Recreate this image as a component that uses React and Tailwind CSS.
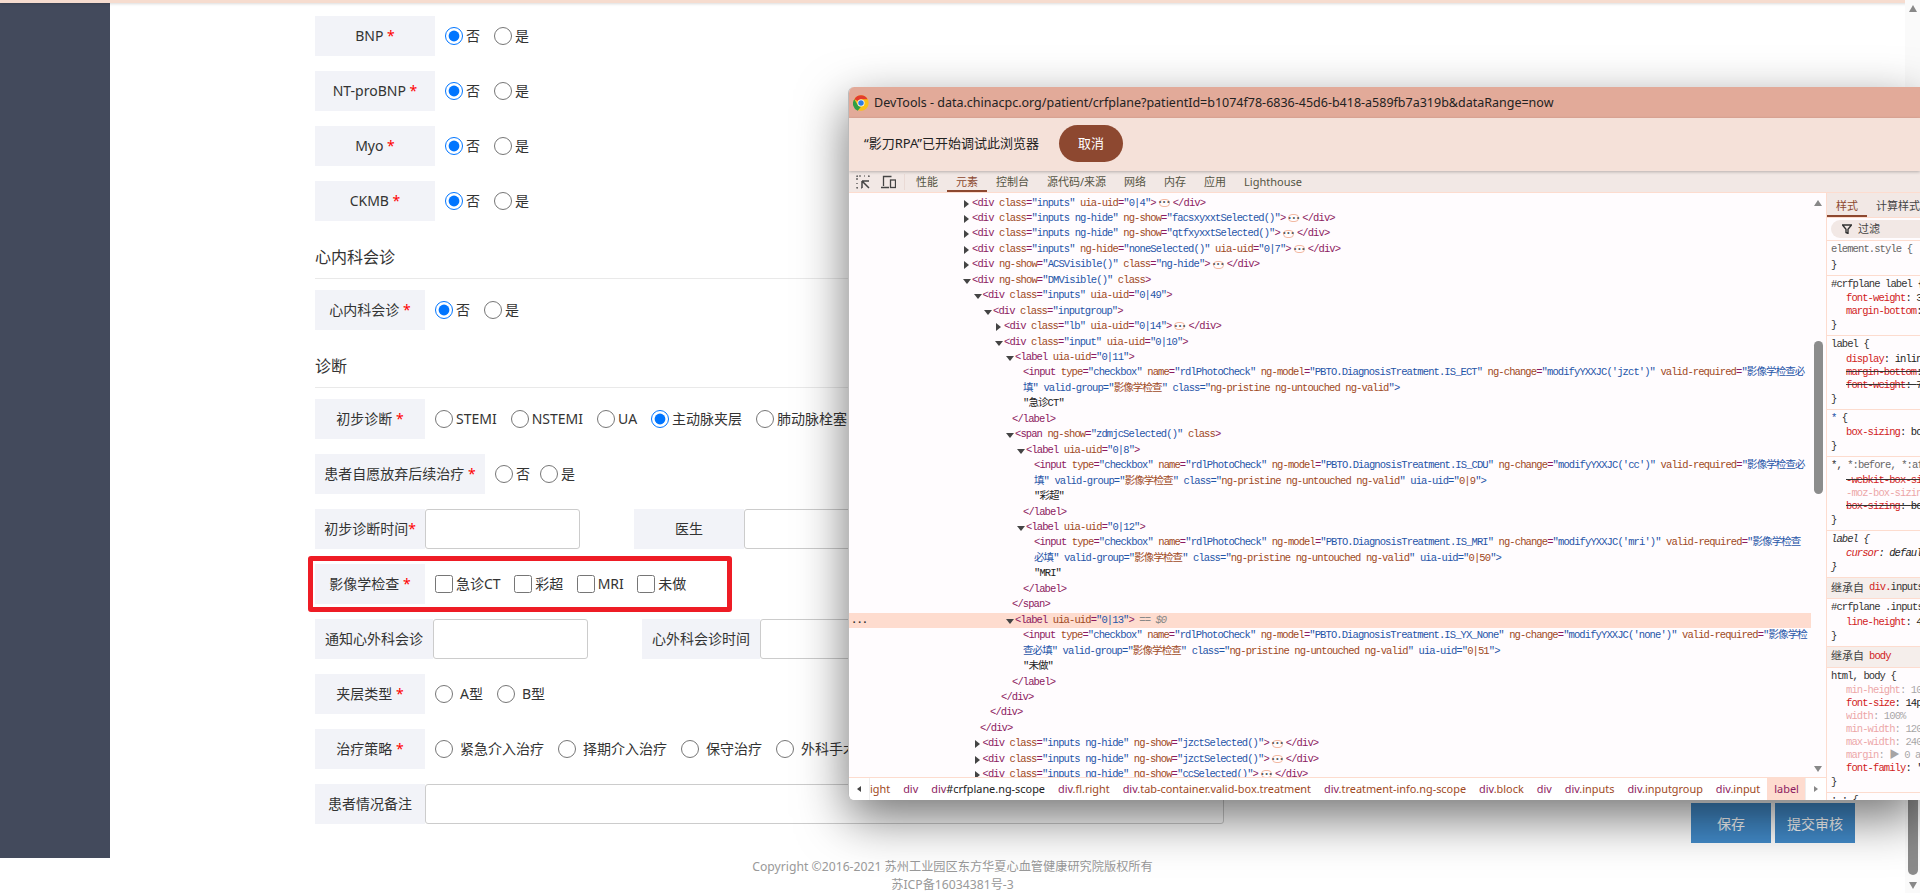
import React from "react";

const SANS = "font-['Noto_Sans','Noto_Sans_CJK_SC',sans-serif]";

const Radio = ({ on, text, wide }) => (
  <label className={`flex items-center ${wide ? "gap-[7px]" : "gap-[3px]"}`}>
    <input type="radio" readOnly checked={!!on} className="m-0 w-[18px] h-[18px]" />
    <span className="-translate-y-px">{text}</span>
  </label>
);
const Check = ({ text }) => (
  <label className="flex items-center gap-[3px]">
    <input type="checkbox" readOnly className="m-0 w-[18px] h-[18px]" />
    <span className="-translate-y-px">{text}</span>
  </label>
);
const Lb = ({ w = "w-[110px]", children, star }) => (
  <div className={`${w} h-10 shrink-0 bg-[#f2f3f8] flex items-center justify-center whitespace-pre pb-[2px]`}>
    {children}
    {star === "tight" ? <span className="text-[#f00]">*</span> : star ? <span className="text-[#f00]"> *</span> : null}
  </div>
);
const Field = ({ w = "w-[155px]" }) => <div className={`${w} h-10 shrink-0 border border-[#ccc] rounded-[3px] bg-white`} />;

const YesNo = ({ name }) => (
  <div className="flex items-center">
    <Lb w="w-[120px]" star>{name}</Lb>
    <div className="flex items-center gap-[14px] ml-[10px]">
      <Radio on text="否" />
      <Radio text="是" />
    </div>
  </div>
);

const tagC = "text-[#8c1a60]";
const attrC = "text-[#a0491d]";
const valC = "text-[#1f55a8]";

function tokens(s) {
  const re = /<\/?[a-z]+|\/?>|[\w-]+(?==)|=|"[^"]*"?|…|\s+|[^\s<>="…]+/g;
  return (s.match(re) || []).map((t, i) => {
    if (t === "…")
      return <span key={i} className="inline-flex items-center justify-center align-middle w-[11px] h-[8px] mx-[3px] rounded-[4px] border border-[#f3b9a2] text-[#555] text-[7px] leading-none tracking-normal">•••</span>;
    if (/^<|^\/?>/.test(t)) return <span key={i} className={tagC}>{t}</span>;
    if (t === "=") return <span key={i} className={tagC}>=</span>;
    if (t[0] === '"') return <span key={i} className={valC}>{t}</span>;
    if (/^\s+$/.test(t)) return <span key={i}>{t}</span>;
    return <span key={i} className={attrC}>{t}</span>;
  });
}

const P = (m, c, v) => `<input type="checkbox" name="rdlPhotoCheck" ng-model="PBTO.DiagnosisTreatment.${m}" ng-change="modifyYXXJC('${c}')" valid-required="${v}`;

const rows = [
  { x: 972, a: "r", s: '<div class="inputs" uia-uid="0|4">…</div>' },
  { x: 972, a: "r", s: '<div class="inputs ng-hide" ng-show="facsxyxxtSelected()">…</div>' },
  { x: 972, a: "r", s: '<div class="inputs ng-hide" ng-show="qtfxyxxtSelected()">…</div>' },
  { x: 972, a: "r", s: '<div class="inputs" ng-hide="noneSelected()" uia-uid="0|7">…</div>' },
  { x: 972, a: "r", s: '<div ng-show="ACSVisible()" class="ng-hide">…</div>' },
  { x: 972, a: "d", s: '<div ng-show="DMVisible()" class>' },
  { x: 982.5, a: "d", s: '<div class="inputs" uia-uid="0|49">' },
  { x: 993, a: "d", s: '<div class="inputgroup">' },
  { x: 1004, a: "r", s: '<div class="lb" uia-uid="0|14">…</div>' },
  { x: 1004, a: "d", s: '<div class="input" uia-uid="0|10">' },
  { x: 1015, a: "d", s: '<label uia-uid="0|11">' },
  { x: 1023, s: P("IS_ECT", "jzct", "影像学检查必") },
  { x: 1023, c: "填", s: '" valid-group="影像学检查" class="ng-pristine ng-untouched ng-valid">' },
  { x: 1023, t: '"急诊CT"' },
  { x: 1012, s: "</label>" },
  { x: 1015, a: "d", s: '<span ng-show="zdmjcSelected()" class>' },
  { x: 1026, a: "d", s: '<label uia-uid="0|8">' },
  { x: 1034, s: P("IS_CDU", "cc", "影像学检查必") },
  { x: 1034, c: "填", s: '" valid-group="影像学检查" class="ng-pristine ng-untouched ng-valid" uia-uid="0|9">' },
  { x: 1034, t: '"彩超"' },
  { x: 1023, s: "</label>" },
  { x: 1026, a: "d", s: '<label uia-uid="0|12">' },
  { x: 1034, s: P("IS_MRI", "mri", "影像学检查") },
  { x: 1034, c: "必填", s: '" valid-group="影像学检查" class="ng-pristine ng-untouched ng-valid" uia-uid="0|50">' },
  { x: 1034, t: '"MRI"' },
  { x: 1023, s: "</label>" },
  { x: 1012, s: "</span>" },
  { x: 1015, a: "d", s: '<label uia-uid="0|13">', sel: true },
  { x: 1023, s: P("IS_YX_None", "none", "影像学检") },
  { x: 1023, c: "查必填", s: '" valid-group="影像学检查" class="ng-pristine ng-untouched ng-valid" uia-uid="0|51">' },
  { x: 1023, t: '"未做"' },
  { x: 1012, s: "</label>" },
  { x: 1001, s: "</div>" },
  { x: 990, s: "</div>" },
  { x: 980, s: "</div>" },
  { x: 982.5, a: "r", s: '<div class="inputs ng-hide" ng-show="jzctSelected()">…</div>' },
  { x: 982.5, a: "r", s: '<div class="inputs ng-hide" ng-show="jzctSelected()">…</div>' },
  { x: 982.5, a: "r", s: '<div class="inputs ng-hide" ng-show="ccSelected()">…</div>' },
];

const MONO = "font-['Liberation_Mono','Noto_Sans_CJK_SC',monospace]";

const DomRow = ({ r }) => (
  <div className={`relative h-[15.46px] leading-[15.46px] whitespace-nowrap overflow-hidden ${r.sel ? "bg-[#fedccf]" : ""}`} style={{ paddingLeft: r.x - 849 }}>
    {r.sel && <span className="absolute left-[2px] top-0 text-[#333] font-bold">...</span>}
    {r.a === "r" && <span className="absolute top-[4px] w-0 h-0 border-y-[4px] border-y-transparent border-l-[5px] border-l-[#444]" style={{ left: r.x - 849 - 8 }} />}
    {r.a === "d" && <span className="absolute top-[6px] w-0 h-0 border-x-[4px] border-x-transparent border-t-[5px] border-t-[#444]" style={{ left: r.x - 849 - 9 }} />}
    {r.t && <span className="text-[#222]">{r.t}</span>}
    {r.c && <span className={valC}>{r.c}</span>}
    {r.s && tokens(r.s)}
    {r.sel && <span className="text-[#888] italic"> == $0</span>}
  </div>
);

const crumbs = [
  ["", "ight", 0], ["div", "", 0], ["div", "#crfplane.ng-scope", 1], ["div", ".fl.right", 0],
  ["div", ".tab-container.valid-box.treatment", 0], ["div", ".treatment-info.ng-scope", 0], ["div", ".block", 0],
  ["div", "", 0], ["div", ".inputs", 0], ["div", ".inputgroup", 0], ["div", ".input", 0],
];

const tabs = ["性能", "元素", "控制台", "源代码/来源", "网络", "内存", "应用", "Lighthouse"];

const Rule = ({ children }) => (
  <div className="border-b border-[#fddccf] pl-[4px] pt-[1px] pb-[3px]">{children}</div>
);
const S = ({ children, cls = "" }) => <div className={`h-[14px] mb-[1.5px] leading-[14px] whitespace-nowrap ${cls}`}>{children}</div>;
const E = ({ cls = "" }) => <div className={`h-[14px] leading-[14px] whitespace-nowrap ${cls}`}>{"}"}</div>;
const Pr = ({ k, v, strike, dim, it }) => (
  <div className={`h-[13px] leading-[13px] pl-[15px] whitespace-nowrap ${strike ? "line-through" : ""} ${dim ? "opacity-40" : ""} ${it ? "italic" : ""}`}>
    <span className="text-[#d11d1d]">{k}</span>
    <span className="text-[#222]">: {v}</span>
  </div>
);
const Inh = ({ a, b }) => (
  <div className={`h-[21px] flex items-center pl-[4px] bg-[#f5eeeb] border-b border-[#fddccf] whitespace-nowrap ${SANS}`}>
    <span className="text-[#444] text-[11px] mr-[5px] tracking-normal">继承自</span>
    <span className={`${MONO} text-[#d11d1d]`}>{a}</span>
    {b && <span className={`${MONO} text-[#333]`}>{b}</span>}
  </div>
);

const Section = ({ children }) => (
  <div className="mt-[21px] h-[34px] border-b border-[#e9e9e9] text-[16px] leading-[30px] box-content pb-[2px]">{children}</div>
);

export default function App() {
  return (
    <div className={`relative w-full h-[893px] overflow-hidden bg-white text-[14px] text-[#333] ${SANS}`}>
      <div className="h-[3px] bg-[#f6dccf] shadow-[0_1px_3px_rgba(0,0,0,0.15)] relative" />
      <div className="flex h-[855px]">
        <div className="w-[110px] shrink-0 bg-[#434a5c]" />
        <div className="w-[1745px] flex">
          <div className="w-[1115px] shrink-0 pl-[205px] pt-[13px]">
            <div className="flex flex-col gap-[15px]">
              <YesNo name="BNP" />
              <YesNo name="NT-proBNP" />
              <YesNo name="Myo" />
              <YesNo name="CKMB" />
            </div>
            <Section>心内科会诊</Section>
            <div className="mt-[11px] flex items-center">
              <Lb star>心内科会诊</Lb>
              <div className="flex items-center gap-[14px] ml-[10px]">
                <Radio on text="否" />
                <Radio text="是" />
              </div>
            </div>
            <Section>诊断</Section>
            <div className="mt-[11px] flex items-center">
              <Lb star>初步诊断</Lb>
              <div className="flex items-center gap-[14px] ml-[10px] whitespace-nowrap">
                <Radio text="STEMI" />
                <Radio text="NSTEMI" />
                <Radio text="UA" />
                <Radio on text="主动脉夹层" />
                <Radio text="肺动脉栓塞" />
              </div>
            </div>
            <div className="mt-[15px] flex items-center">
              <Lb w="w-[170px]" star>患者自愿放弃后续治疗</Lb>
              <div className="flex items-center gap-[10px] ml-[10px]">
                <Radio text="否" />
                <Radio text="是" />
              </div>
            </div>
            <div className="mt-[15px] flex items-center">
              <Lb star="tight">初步诊断时间</Lb>
              <Field />
              <div className="ml-[54px] flex">
                <Lb>医生</Lb>
                <Field w="w-[155px]" />
              </div>
            </div>
            <div className="relative mt-[15px] flex items-center">
              <Lb star>影像学检查</Lb>
              <div className="flex items-center gap-[13.5px] ml-[10px] whitespace-nowrap">
                <Check text="急诊CT" />
                <Check text="彩超" />
                <Check text="MRI" />
                <Check text="未做" />
              </div>
              <div className="absolute left-[-7px] top-[-8px] w-[424px] h-[56px] border-[5px] border-[#ee1c25] rounded-[3px]" />
            </div>
            <div className="mt-[15px] flex items-center">
              <Lb w="w-[118px]">通知心外科会诊</Lb>
              <Field />
              <div className="ml-[54px] flex">
                <Lb w="w-[118px]">心外科会诊时间</Lb>
                <Field />
              </div>
            </div>
            <div className="mt-[15px] flex items-center">
              <Lb star>夹层类型</Lb>
              <div className="flex items-center gap-[14px] ml-[10px]">
                <Radio wide text="A型" />
                <Radio wide text="B型" />
              </div>
            </div>
            <div className="mt-[15px] flex items-center">
              <Lb star>治疗策略</Lb>
              <div className="flex items-center gap-[14px] ml-[10px] whitespace-nowrap">
                <Radio wide text="紧急介入治疗" />
                <Radio wide text="择期介入治疗" />
                <Radio wide text="保守治疗" />
                <Radio wide text="外科手术" />
              </div>
            </div>
            <div className="mt-[15px] flex items-center">
              <Lb>患者情况备注</Lb>
              <Field w="w-[799px]" />
            </div>
          </div>
          <div className="flex-1 flex items-end justify-end gap-[4px] pb-[15px]">
            <div className="w-20 h-10 bg-[#428bca] text-white flex items-center justify-center">保存</div>
            <div className="w-20 h-10 bg-[#428bca] text-white flex items-center justify-center">提交审核</div>
          </div>
        </div>
      </div>
      <div className="w-[1795px] pl-[110px] text-center text-[12.2px] leading-[18px] text-[#999]">
        <div>Copyright ©2016-2021 苏州工业园区东方华夏心血管健康研究院版权所有</div>
        <div>苏ICP备16034381号-3</div>
      </div>

      {/* page scrollbar */}
      <div className="absolute right-0 top-0 w-[15px] h-full bg-[#fafafa] flex flex-col items-center">
        <span className="mt-[5px] w-0 h-0 border-x-[4px] border-x-transparent border-b-[7px] border-b-[#888]" />
        <div className="absolute top-[700px] bottom-[18px] left-[3px] w-[10px] rounded-b-[5px] bg-[#8b8b8b]" />
        <span className="absolute bottom-[4px] w-0 h-0 border-x-[4px] border-x-transparent border-t-[7px] border-t-[#888]" />
      </div>

      {/* devtools window */}
      <div className="absolute left-[848px] top-[87px] w-[1072px] h-[713px] flex flex-col rounded-tl-[6px] rounded-bl-[6px] overflow-hidden shadow-[0_18px_50px_rgba(0,0,0,0.55)] bg-[#fffcfe] border-l border-[#bbb]">
        <div className="h-[31px] shrink-0 bg-[#e2aa99] flex items-center pl-[4px] text-[12.5px] text-[#222] whitespace-nowrap">
          <svg width="16" height="16" viewBox="0 0 48 48" className="shrink-0 mr-[5px]">
            <circle cx="24" cy="24" r="23" fill="#fbc116" />
            <path d="M24 1a23 23 0 0 1 19.9 11.5H24a11.5 11.5 0 0 0-10 5.8L4.1 12.5A23 23 0 0 1 24 1z" fill="#e33b2e" />
            <path d="M4.1 12.5 14 29.7a11.5 11.5 0 0 0 10 5.8L14 47A23 23 0 0 1 4.1 12.5z" fill="#2f9e44" />
            <circle cx="24" cy="24" r="10.5" fill="#fff" />
            <circle cx="24" cy="24" r="8.3" fill="#2f7de1" />
          </svg>
          <span className="translate-y-px">DevTools - data.chinacpc.org/patient/crfplane?patientId=b1074f78-6836-45d6-b418-a589fb7a319b&dataRange=now</span>
        </div>
        <div className="h-[53px] shrink-0 bg-[#f5e1d9] flex items-center pl-[15px] pb-[2px] gap-[17px] text-[13px] text-[#222] shadow-[0_1px_3px_rgba(0,0,0,0.25)] relative whitespace-nowrap">
          <span className="w-[178px] shrink-0">“影刀RPA”已开始调试此浏览器</span>
          <span className="w-16 h-[37px] rounded-full bg-[#8d4830] text-white flex items-center justify-center">取消</span>
        </div>
        <div className="h-[22px] shrink-0 bg-[#f2e8e5] flex items-center text-[11px] text-[#554] whitespace-nowrap border-b border-[#fddccf]">
          <svg width="14" height="14" viewBox="0 0 14 14" className="ml-[7px] shrink-0" fill="none" stroke="#444">
            <path d="M1 5V1h4M8 1h1M12 1h1v1M1 8v1M1 12v1h1M5 13h1" strokeWidth="1.2" strokeDasharray="2 1" />
            <path d="M6 6h7M6 6v7M6 6l7 7" strokeWidth="1.5" />
          </svg>
          <svg width="15" height="14" viewBox="0 0 15 14" className="ml-[11px] shrink-0" fill="none" stroke="#444" strokeWidth="1.3">
            <path d="M2.5 11V1.5h8M0 12.5h8" />
            <rect x="9.5" y="5" width="5" height="7.5" />
          </svg>
          <span className="ml-[8px] w-px h-[16px] bg-[#eadad5]" />
          <div className="flex ml-[2px] h-full">
            {tabs.map((t, i) => (
              <div key={t} className={`relative flex items-center px-[9px] pt-[2px] ${i === 1 ? "text-[#8d4830]" : ""}`}>
                {t}
                {i === 1 && <span className="absolute left-0 right-0 bottom-0 h-[2px] bg-[#8d4830]" />}
              </div>
            ))}
          </div>
        </div>
        <div className="flex flex-1 min-h-0">
          <div className="w-[978px] shrink-0 flex flex-col border-r border-[#fddccf]">
            <div className={`relative flex-1 min-h-0 pr-[15px] pt-[2.5px] overflow-hidden text-[10.5px] tracking-[-0.9px] ${MONO}`}>
              {rows.map((r, i) => <DomRow key={i} r={r} />)}
              <span className="absolute right-[4px] top-[7px] w-0 h-0 border-x-[4.5px] border-x-transparent border-b-[6px] border-b-[#888]" />
              <div className="absolute right-[3px] top-[148px] w-[9px] h-[153px] rounded-[5px] bg-[#8c8c8c]" />
              <span className="absolute right-[4px] bottom-[5px] w-0 h-0 border-x-[4.5px] border-x-transparent border-t-[6px] border-t-[#888]" />
            </div>
            <div className="h-[23px] shrink-0 border-t border-[#fddccf] flex items-stretch bg-[#fff] text-[10.9px] whitespace-nowrap overflow-hidden">
              <div className="w-[21px] shrink-0 flex items-center justify-center border-r border-[#eee]">
                <span className="w-0 h-0 border-y-[3.5px] border-y-transparent border-r-[4px] border-r-[#444]" />
              </div>
              <div className="flex-1 min-w-0 flex items-center gap-[13px] overflow-hidden">
                {crumbs.map(([a, b, k], i) => (
                  <span key={i} className={`shrink-0 ${i === 0 ? "text-[#a0491d]" : ""}`}>
                    <span className={tagC}>{a}</span>
                    <span className={k ? "text-[#222]" : "text-[#a0491d]"}>{b}</span>
                  </span>
                ))}
                <span className="shrink-0 self-stretch -ml-[6px] px-[7px] flex items-center bg-[#fedccf] text-[#8c1a60]">label</span>
              </div>
              <div className="w-[21px] shrink-0 flex items-center justify-center border-l border-[#eee]">
                <span className="w-0 h-0 border-y-[3.5px] border-y-transparent border-l-[4px] border-l-[#888]" />
              </div>
            </div>
          </div>
          <div className="flex-1 min-w-0 overflow-hidden flex flex-col whitespace-nowrap">
            <div className="h-[25px] shrink-0 bg-[#f2e8e5] flex text-[11px] text-[#444] border-b border-[#fddccf]">
              <div className="relative w-[40px] shrink-0 flex items-center justify-center pt-[2px] text-[#8d4830]">
                样式
                <span className="absolute left-0 right-0 bottom-0 h-[2px] bg-[#8d4830]" />
              </div>
              <div className="ml-[9px] flex items-center pt-[2px] shrink-0">计算样式</div>
            </div>
            <div className="h-[23px] shrink-0 border-b border-[#fddccf] flex items-center pl-[4px] bg-[#fffcfe]">
              <div className="w-[100px] shrink-0 h-[18px] rounded-l-full bg-[#f2e8e5] flex items-center pl-[11px] text-[11px] text-[#444]">
                <svg width="10" height="10" viewBox="0 0 10 10" className="mr-[6px] shrink-0"><path d="M0.5 1h9L6 5.2V9.5L4 8.5V5.2z" fill="none" stroke="#333" strokeWidth="1.4" /></svg>
                过滤
              </div>
            </div>
            <div className={`text-[10.5px] tracking-[-0.9px] ${MONO} text-[#333]`}>
              <Rule>
                <S cls="text-[#666]">element.style {"{"}</S>
                <E />
              </Rule>
              <Rule>
                <S>#crfplane label {"{"}</S>
                <Pr k="font-weight" v="300" />
                <Pr k="margin-bottom" v="0" />
                <E />
              </Rule>
              <Rule>
                <S>label {"{"}</S>
                <Pr k="display" v="inline-block" />
                <Pr strike k="margin-bottom" v="5px" />
                <Pr strike k="font-weight" v="700" />
                <E />
              </Rule>
              <Rule>
                <S><span className="text-[#1f55a8]">*</span> {"{"}</S>
                <Pr k="box-sizing" v="border-box" />
                <E />
              </Rule>
              <Rule>
                <S>*, <span className="text-[#666]">*:before, *:after</span> {"{"}</S>
                <Pr strike k="-webkit-box-sizing" v="border-box" />
                <Pr dim k="-moz-box-sizing" v="border-box" />
                <Pr strike k="box-sizing" v="border-box" />
                <E />
              </Rule>
              <Rule>
                <S cls="italic">label {"{"}</S>
                <Pr it k="cursor" v="default" />
                <E cls="italic" />
              </Rule>
              <Inh a="div." b="inputs" />
              <Rule>
                <S>#crfplane .inputs {"{"}</S>
                <Pr k="line-height" v="40px" />
                <E />
              </Rule>
              <Inh a="body" />
              <Rule>
                <S>html, body {"{"}</S>
                <Pr dim k="min-height" v="100%" />
                <Pr k="font-size" v="14px" />
                <Pr dim k="width" v="100%" />
                <Pr dim k="min-width" v="1200px" />
                <Pr dim k="max-width" v="2400px" />
                <Pr dim k="margin" v="▶ 0 auto" />
                <Pr k="font-family" v="'Microsoft YaHei'" />
                <E />
              </Rule>
              <S cls="pl-[4px]">: : {"{"}</S>
            </div>
          </div>
        </div>
      </div>
    </div>
  );
}
